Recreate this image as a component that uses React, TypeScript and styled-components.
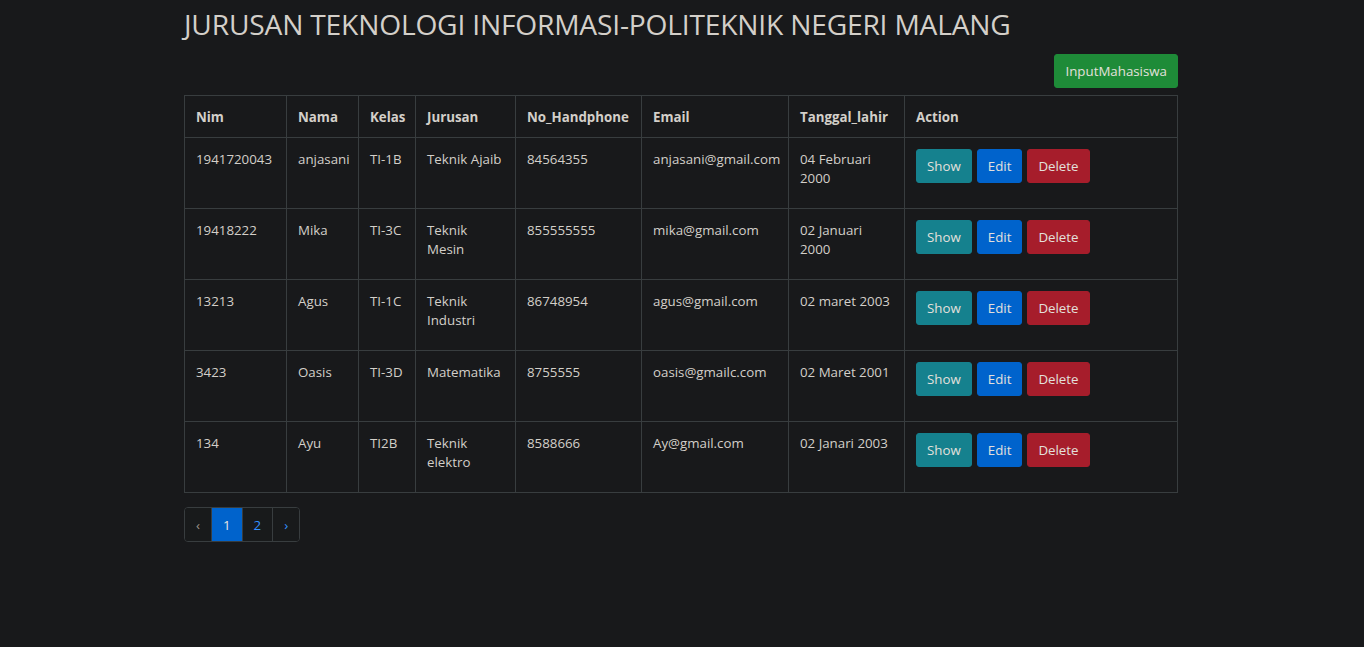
import React from "react";
import styled, { createGlobalStyle } from "styled-components";

const GlobalStyle = createGlobalStyle`
  html, body {
    margin: 0;
    padding: 0;
    background: #18191b;
  }
  body {
    font-family: "Open Sans", "Noto Sans", sans-serif;
    color: #d3cfc9;
    font-size: 13.3px;
  }
`;

type Mahasiswa = {
  nim: string;
  nama: string;
  kelas: string;
  jurusan: string;
  hp: string;
  email: string;
  lahir: string;
};

const data: Mahasiswa[] = [
  { nim: "1941720043", nama: "anjasani", kelas: "TI-1B", jurusan: "Teknik Ajaib", hp: "84564355", email: "anjasani@gmail.com", lahir: "04 Februari 2000" },
  { nim: "19418222", nama: "Mika", kelas: "TI-3C", jurusan: "Teknik Mesin", hp: "855555555", email: "mika@gmail.com", lahir: "02 Januari 2000" },
  { nim: "13213", nama: "Agus", kelas: "TI-1C", jurusan: "Teknik Industri", hp: "86748954", email: "agus@gmail.com", lahir: "02 maret 2003" },
  { nim: "3423", nama: "Oasis", kelas: "TI-3D", jurusan: "Matematika", hp: "8755555", email: "oasis@gmailc.com", lahir: "02 Maret 2001" },
  { nim: "134", nama: "Ayu", kelas: "TI2B", jurusan: "Teknik elektro", hp: "8588666", email: "Ay@gmail.com", lahir: "02 Janari 2003" },
];

const columns = ["Nim", "Nama", "Kelas", "Jurusan", "No_Handphone", "Email", "Tanggal_lahir", "Action"];
const widths = [102, 72, 57, 100, 126, 147, 116, 273];

export default function App() {
  return (
    <>
      <GlobalStyle />
      <Container>
        <Title>JURUSAN TEKNOLOGI INFORMASI-POLITEKNIK NEGERI MALANG</Title>
        <Toolbar>
          <Button $variant="success">InputMahasiswa</Button>
        </Toolbar>
        <Table>
          <colgroup>
            {widths.map((w, i) => (
              <col key={i} style={{ width: w }} />
            ))}
          </colgroup>
          <thead>
            <tr>
              {columns.map((c) => (
                <Th key={c}>{c}</Th>
              ))}
            </tr>
          </thead>
          <tbody>
            {data.map((m) => (
              <Row key={m.nim}>
                <Td>{m.nim}</Td>
                <Td>{m.nama}</Td>
                <Td>{m.kelas}</Td>
                <Td>{m.jurusan}</Td>
                <Td>{m.hp}</Td>
                <Td>{m.email}</Td>
                <Td>{m.lahir}</Td>
                <ActionCell>
                  <Actions>
                    <Button $variant="info">Show</Button>
                    <Button $variant="primary">Edit</Button>
                    <Button $variant="danger">Delete</Button>
                  </Actions>
                </ActionCell>
              </Row>
            ))}
          </tbody>
        </Table>
        <Pagination>
          <PageItem $muted>‹</PageItem>
          <PageItem $active>1</PageItem>
          <PageItem>2</PageItem>
          <PageItem>›</PageItem>
        </Pagination>
      </Container>
    </>
  );
}

const Container = styled.div`
  width: 994px;
  margin-left: 184px;
  padding-top: 6px;
`;

const Title = styled.h2`
  margin: 0;
  font-size: 28.2px;
  font-weight: 400;
  line-height: 36px;
  color: #d3cfc9;
  letter-spacing: -0.2px;
`;

const Toolbar = styled.div`
  display: flex;
  justify-content: flex-end;
  margin-top: 12px;
  margin-bottom: 7px;
`;

const colors: Record<string, string> = {
  success: "#1e8b38",
  info: "#15818e",
  primary: "#0063cc",
  danger: "#a61d2b",
};

const Button = styled.button<{ $variant: string }>`
  display: inline-block;
  height: 34px;
  padding: 0 10px;
  border: 1px solid ${(p) => colors[p.$variant]};
  border-radius: 3px;
  background: ${(p) => colors[p.$variant]};
  color: #e3e0dc;
  font-family: "Open Sans", "Noto Sans", sans-serif;
  font-size: 13.3px;
  line-height: 32px;
  cursor: pointer;
`;

const Table = styled.table`
  width: 994px;
  table-layout: fixed;
  border-collapse: collapse;
  margin-bottom: 14px;
`;

const Th = styled.th`
  height: 41px;
  padding: 0 11px;
  border: 1px solid #383d3f;
  text-align: left;
  font-weight: 700;
  font-size: 13.3px;
  vertical-align: middle;
`;

const Row = styled.tr`
  height: 71px;
`;

const Td = styled.td`
  padding: 12px 11px 0;
  border: 1px solid #383d3f;
  vertical-align: top;
  font-size: 13.3px;
  line-height: 19px;
`;

const ActionCell = styled(Td)`
  padding-top: 11px;
`;

const Actions = styled.div`
  display: flex;
  gap: 5px;
`;

const Pagination = styled.ul`
  display: flex;
  width: fit-content;
  margin: 0;
  padding: 0;
  list-style: none;
  border: 1px solid #383d3f;
  border-radius: 4px;
  overflow: hidden;
`;

const PageItem = styled.li<{ $active?: boolean; $muted?: boolean }>`
  height: 33px;
  padding: 0 11px;
  box-sizing: border-box;
  display: flex;
  align-items: center;
  justify-content: center;
  font-size: 13.3px;
  background: ${(p) => (p.$active ? "#0063cc" : "#181a1b")};
  color: ${(p) => (p.$active ? "#e8e6e3" : p.$muted ? "#9d9489" : "#3391ff")};
  & + & {
    border-left: 1px solid #383d3f;
  }
`;
